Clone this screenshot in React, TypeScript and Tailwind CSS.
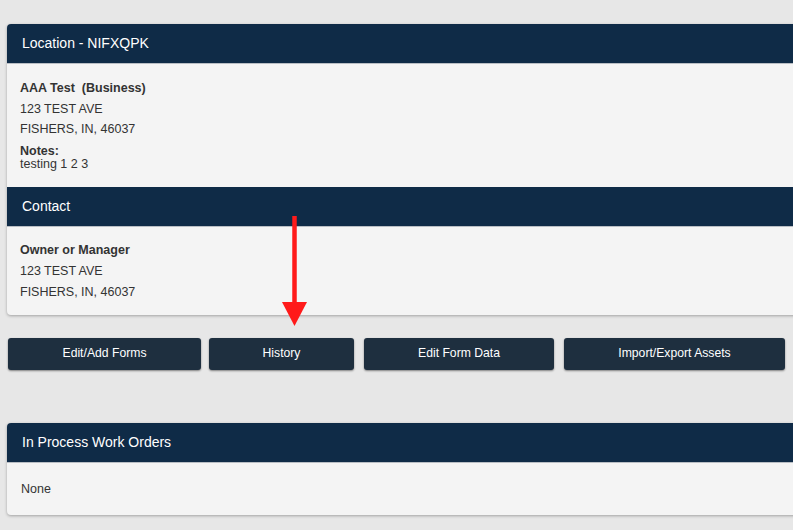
import React from "react";

const font = { fontFamily: '"Liberation Sans", Arial, Helvetica, sans-serif' };

function CardHeader({ title }: { title: string }) {
  return (
    <div className="flex h-[40px] items-center border-b border-[#b9bec4] bg-[#0f2b47] px-[15px] text-[14px] text-white">
      {title}
    </div>
  );
}

export default function App() {
  return (
    <div
      className="relative h-[530px] w-[793px] overflow-hidden bg-[#e7e7e7] text-[#333333]"
      style={font}
    >
      <div className="w-[830px] pl-[7px] pt-[24px]">
        {/* location + contact */}
        <section className="overflow-hidden rounded-[4px] bg-[#f4f4f4] shadow-[0_1px_3px_rgba(0,0,0,0.3)]">
          <CardHeader title="Location - NIFXQPK" />
          <div className="px-[13px] pb-[16px] pt-[14px] text-[12.5px]">
            <div className="leading-[20.5px]">
              <div className="font-bold">AAA Test&nbsp; (Business)</div>
              <div>123 TEST AVE</div>
              <div>FISHERS, IN, 46037</div>
            </div>
            <div className="mt-[5px] leading-[13px]">
              <div className="font-bold">Notes:</div>
              <div>testing 1 2 3</div>
            </div>
          </div>
          <CardHeader title="Contact" />
          <div className="px-[13px] pb-[12px] pt-[13px] text-[12.5px] leading-[21px]">
            <div className="font-bold">Owner or Manager</div>
            <div>123 TEST AVE</div>
            <div>FISHERS, IN, 46037</div>
          </div>
        </section>

        {/* actions */}
        <div className="mt-[23px] flex text-[12.2px] text-white">
          <button className="ml-[1px] h-[32px] w-[193px] rounded-[3px] bg-[#1e2f3f] shadow-[0_1px_2px_rgba(0,0,0,0.45)]">
            Edit/Add Forms
          </button>
          <button className="ml-[8px] h-[32px] w-[145px] rounded-[3px] bg-[#1e2f3f] shadow-[0_1px_2px_rgba(0,0,0,0.45)]">
            History
          </button>
          <button className="ml-[10px] h-[32px] w-[190px] rounded-[3px] bg-[#1e2f3f] shadow-[0_1px_2px_rgba(0,0,0,0.45)]">
            Edit Form Data
          </button>
          <button className="ml-[10px] h-[32px] w-[221px] rounded-[3px] bg-[#1e2f3f] shadow-[0_1px_2px_rgba(0,0,0,0.45)]">
            Import/Export Assets
          </button>
        </div>

        {/* work orders */}
        <section className="mt-[53px] overflow-hidden rounded-[4px] bg-[#f4f4f4] shadow-[0_1px_3px_rgba(0,0,0,0.3)]">
          <CardHeader title="In Process Work Orders" />
          <div className="px-[14px] pb-[16px] pt-[16px] text-[12.5px] leading-[20px]">None</div>
        </section>
      </div>

      {/* red annotation arrow */}
      <svg
        className="absolute left-[280px] top-[214px]"
        width="30"
        height="114"
        viewBox="0 0 30 114"
      >
        <line x1="14.5" y1="2" x2="14.5" y2="92" stroke="#ff1a1a" strokeWidth="4.5" />
        <polygon points="2,88 27,88 14.5,112" fill="#ff1a1a" />
      </svg>
    </div>
  );
}
